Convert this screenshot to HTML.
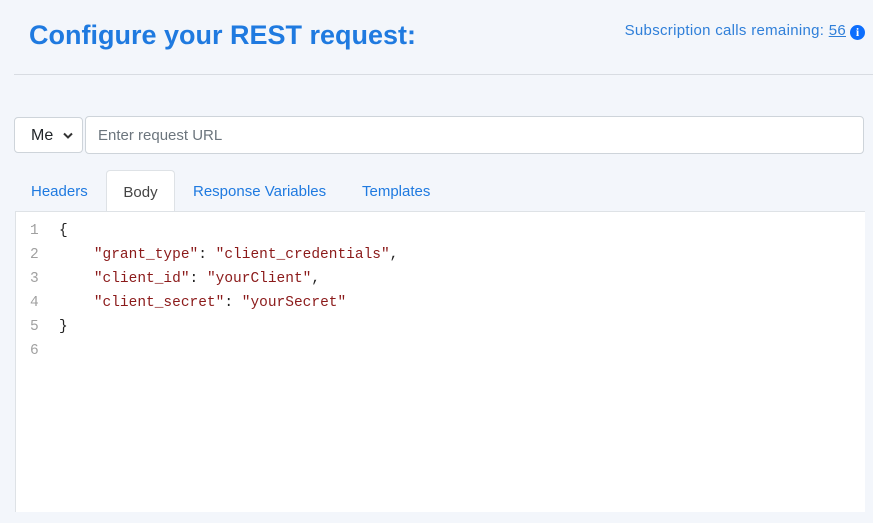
<!DOCTYPE html>
<html><head><style>
body{margin:0;width:873px;height:523px;background:#f3f6fb;font-family:"Liberation Sans",sans-serif;position:relative;overflow:hidden}
.t{position:absolute;left:29px;top:20px;font-size:27px;font-weight:bold;color:#1f7ae0}
.sub{position:absolute;right:8px;top:22px;font-size:15px;letter-spacing:0.3px;color:#2f7fd9}
.sub u{color:#2f7fd9}
.info{display:inline-block;width:15px;height:15px;border-radius:50%;background:#0d6efd;color:#fff;font-size:12px;font-weight:bold;text-align:center;line-height:15px;vertical-align:-1px;margin-left:4px;font-family:"Liberation Serif",serif;letter-spacing:0}
hr{position:absolute;left:14px;right:0;top:74px;margin:0;border:0;border-top:1px solid #d8dce2}
.sel{position:absolute;left:14px;top:117px;width:69px;height:36px;border:1px solid #ced4da;border-radius:4px;background:#fff;box-sizing:border-box;font-size:16px;color:#212529;padding:9px 0 0 16px}
.sel svg{position:absolute;right:9px;top:14px}
.url{position:absolute;left:85px;top:116px;width:779px;height:38px;border:1px solid #ced4da;border-radius:4px;background:#fff;box-sizing:border-box;font-size:15px;color:#6c757d;padding:10px 12px}
.tab{position:absolute;top:183px;font-size:15px;color:#1f7ae0}
.body{position:absolute;left:106px;top:170px;width:69px;height:43px;background:#fff;border:1px solid #dee2e6;border-bottom:0;border-radius:4px 4px 0 0;box-sizing:border-box;color:#444;font-size:15px;text-align:center;padding-top:13px}
.ed{position:absolute;left:15px;top:211px;width:850px;height:301px;background:#fff;border-left:1px solid #dee2e6;border-top:1px solid #dee2e6;box-sizing:border-box}
pre{margin:0;position:absolute;top:7px;font-family:"Liberation Mono",monospace;font-size:14.5px;line-height:24px}
.ln{left:14px;color:#a0a0a0}
.cd{left:43px;color:#222}
.s{color:#8b1a1a}
</style></head><body>
<div class="t">Configure your REST request:</div>
<div class="sub">Subscription calls remaining: <u>56</u><span class="info">i</span></div>
<hr>
<div class="sel">Me<svg width="10" height="7" viewBox="0 0 10 7"><path d="M1 1.5L5 5.5L9 1.5" fill="none" stroke="#333" stroke-width="2"/></svg></div>
<div class="url">Enter request URL</div>
<div class="tab" style="left:31px">Headers</div>
<div class="body">Body</div>
<div class="tab" style="left:193px">Response Variables</div>
<div class="tab" style="left:362px">Templates</div>
<div class="ed">
<pre class="ln">1
2
3
4
5
6</pre>
<pre class="cd">{
    <span class="s">"grant_type"</span>: <span class="s">"client_credentials"</span>,
    <span class="s">"client_id"</span>: <span class="s">"yourClient"</span>,
    <span class="s">"client_secret"</span>: <span class="s">"yourSecret"</span>
}
</pre>
</div>
</body></html>
